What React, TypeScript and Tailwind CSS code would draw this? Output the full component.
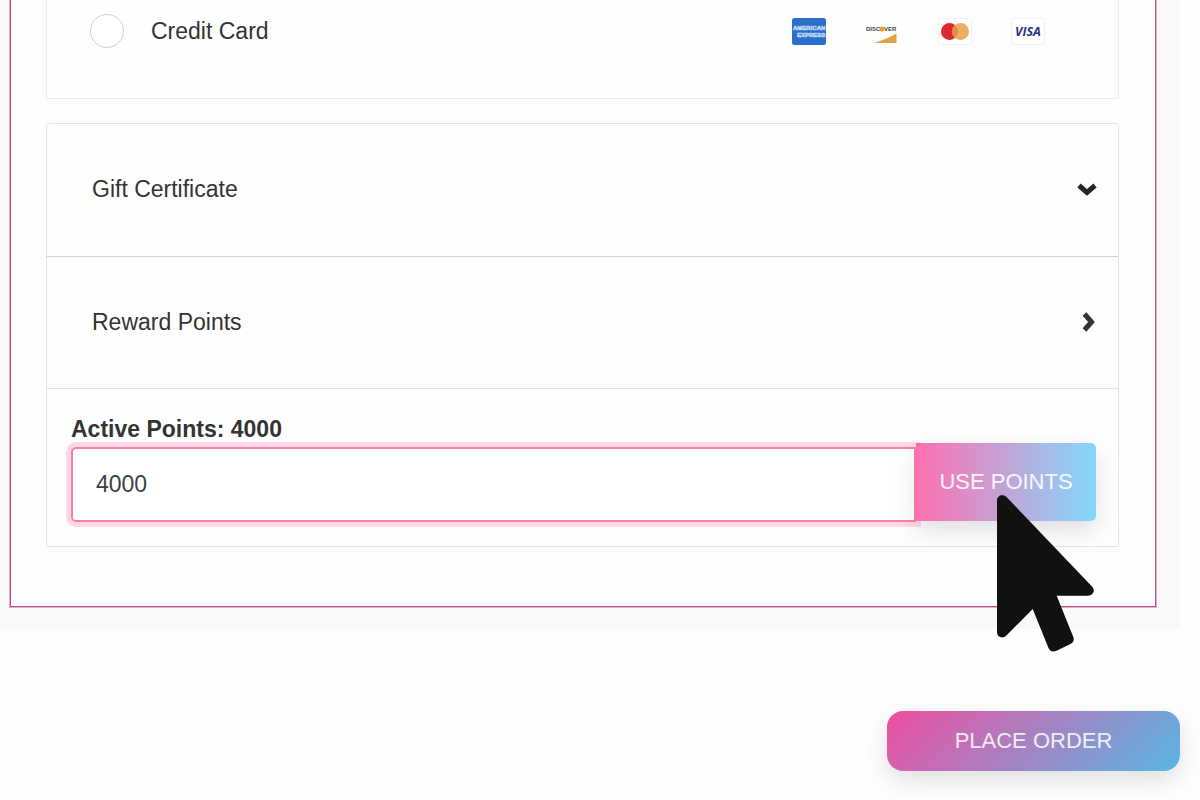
import { useState } from "react";

const activePoints = 4000;

const AmexIcon = () => (
  <svg className="w-[34px] h-[27px]" viewBox="0 0 34 27" role="img" aria-label="American Express">
    <rect width="34" height="27" rx="2.500" fill="#2a6fca" />
    <g
      fill="#4a86d4"
      stroke="#b9d3f3"
      strokeWidth="0.700"
      fontFamily="Liberation Sans, sans-serif"
      fontWeight="700"
      fontSize="6"
    >
      <text x="1" y="12">AMERICAN</text>
      <text x="5" y="19">EXPRESS</text>
    </g>
  </svg>
);

const DiscoverIcon = () => (
  <svg className="w-[34px] h-[27px]" viewBox="0 0 34 27" role="img" aria-label="Discover">
    <g fill="#444" fontFamily="Liberation Sans, sans-serif" fontWeight="700" fontSize="6">
      <text x="1" y="13">DISC</text>
      <text x="19" y="13">VER</text>
    </g>
    <circle cx="17" cy="11" r="2.500" fill="#e89a2c" />
    <path d="M9 25C17 22.500 25 19.500 31.500 15.500V25Z" fill="#e3a246" />
  </svg>
);

const MastercardIcon = () => (
  <svg className="w-[34px] h-[27px]" viewBox="0 0 34 27" role="img" aria-label="Mastercard">
    <rect x="0.500" y="0.500" width="33" height="26" rx="2" fill="#fff" stroke="#f1f1f1" />
    <circle cx="11.500" cy="13.500" r="8.500" fill="#dc2a2e" />
    <circle cx="22.500" cy="13.500" r="8.500" fill="#ecb062" />
    <path d="M17 7a8.500 8.500 0 0 1 0 13a8.500 8.500 0 0 1 0-13Z" fill="#e58a4a" />
  </svg>
);

const VisaIcon = () => (
  <svg className="w-[34px] h-[27px]" viewBox="0 0 34 27" role="img" aria-label="Visa">
    <rect x="0.500" y="0.500" width="33" height="26" rx="2" fill="#fff" stroke="#f1f1f1" />
    <text
      x="17"
      y="18"
      textAnchor="middle"
      fill="#28348a"
      fontFamily="Open Sans, sans-serif"
      fontWeight="700"
      fontStyle="italic"
      fontSize="12.500"
    >
      VISA
    </text>
  </svg>
);

const ChevronDown = () => (
  <svg className="w-5 h-[13px]" viewBox="0 0 20 13" fill="none" aria-hidden="true">
    <path d="M2 2.500L10 9.500L18 2.500" stroke="#212529" strokeWidth="5" />
  </svg>
);

const ChevronRight = () => (
  <svg className="w-[13px] h-5" viewBox="0 0 13 20" fill="none" aria-hidden="true">
    <path d="M2.500 2L9.500 10L2.500 18" stroke="#333" strokeWidth="5" />
  </svg>
);

const Cursor = () => (
  <svg
    className="absolute left-[81px] top-[52px] z-20 w-[98px] h-[158px] pointer-events-none"
    viewBox="0 0 98 158"
    aria-hidden="true"
  >
    <path
      d="M0 5.500C0 0.500 5.800 -1.500 9.500 2L95 91.500C98.500 95 96.500 100.700 91 100.700H59.700L76.300 142C77.500 145 76.500 147.500 73.500 149L60 155.500C56 157.300 53 156.500 51.500 153L35.700 114L9.500 140.500C5.800 144 0 142.500 0 137Z"
      fill="#11110f"
    />
  </svg>
);

export default function App() {
  const [points, setPoints] = useState("4000");

  return (
    <main
      className="bg-[#fefefe] min-h-screen text-[23px] leading-7 text-[#333]"
      style={{ fontFamily: '"Liberation Sans", Arial, sans-serif' }}
    >
      <section className="mr-5 bg-[#f9f9f9] pl-[10px] pr-6 pb-[22px]">
        <div className="bg-[#fefefe] border border-t-0 border-[#be4a86] ring-1 ring-[#be4a86]/40 pl-[35px] pr-9 pb-[59px]">
          <div className="flex items-center justify-between border border-t-0 border-[#ebebeb] pt-[14px] pb-[50px] pl-[43px] pr-[73px]">
            <label className="flex items-center gap-[27px]">
              <input
                type="radio"
                name="payment"
                className="appearance-none w-[34px] h-[34px] rounded-full border border-[#ced2d8] bg-white"
              />
              Credit Card
            </label>
            <div className="flex gap-[39px]">
              <AmexIcon />
              <DiscoverIcon />
              <MastercardIcon />
              <VisaIcon />
            </div>
          </div>

          <div className="mt-6 border border-[#e4e4e4] rounded-t-[3px]">
            <button
              type="button"
              className="flex w-full items-center justify-between pl-[45px] pr-[21px] pt-[51px] pb-[53px] border-b border-[#d2d2d2]"
            >
              Gift Certificate
              <ChevronDown />
            </button>
            <button
              type="button"
              className="flex w-full items-center justify-between pl-[45px] pr-[23px] pt-[51px] pb-[52px] border-b border-[#dde0e4]"
            >
              Reward Points
              <ChevronRight />
            </button>
            <div className="pt-[26px] pb-6 pl-6 pr-[22px]">
              <label htmlFor="points" className="block font-bold">
                Active Points: {activePoints}
              </label>
              <div className="flex items-start">
                <input
                  id="points"
                  type="text"
                  value={points}
                  onChange={(e) => setPoints(e.target.value)}
                  className="mt-1 h-[75px] min-w-0 flex-1 rounded-l-[5px] border-2 border-[#fb7fa8] bg-white px-[23px] text-[#3b4046] ring-5 ring-[#ffd8e5] outline-none"
                />
                <div className="relative z-10 shrink-0">
                  <button
                    type="button"
                    className="h-[78px] w-[180px] rounded-r-[5px] bg-[linear-gradient(90deg,#ff70b0,#84d8fd)] text-[22px] text-white/90 shadow-[0_10px_24px_rgba(0,0,0,0.12)]"
                  >
                    USE POINTS
                  </button>
                  <Cursor />
                </div>
              </div>
            </div>
          </div>
        </div>
      </section>

      <div className="flex justify-end mt-[82px] mr-5">
        <button
          type="button"
          className="h-[60px] w-[293px] rounded-[16px] bg-[linear-gradient(135deg,#f04fa2,#58b7e3)] text-[22px] text-white/85 shadow-[0_10px_24px_rgba(0,0,0,0.12)]"
        >
          PLACE ORDER
        </button>
      </div>
    </main>
  );
}
